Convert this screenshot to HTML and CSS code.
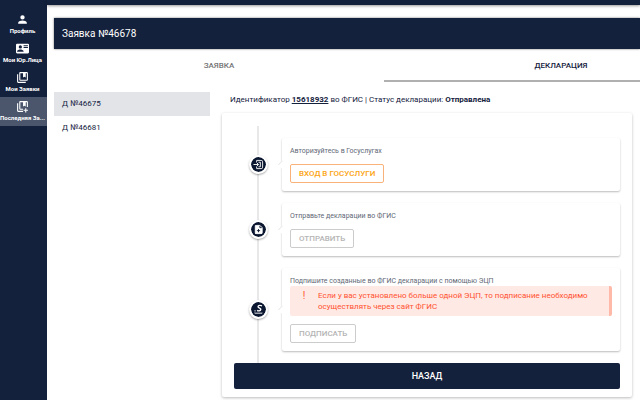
FILE: index.html
```html
<!DOCTYPE html>
<html lang="ru">
<head>
<meta charset="utf-8">
<title>Заявка №46678</title>
<link rel="stylesheet" href="styles.css">
</head>
<body>
<div class="app">
  <nav class="sidebar">
    <a class="nav-item" href="#">
      <svg class="nav-icon" viewBox="0 0 24 24"><path d="M12 12a4 4 0 1 0 0-8 4 4 0 0 0 0 8zm0 2c-2.700 0-8 1.300-8 4v2h16v-2c0-2.700-5.300-4-8-4z"/></svg>
      <span>Профиль</span>
    </a>
    <a class="nav-item" href="#">
      <svg class="nav-icon" viewBox="0 0 24 24"><path fill-rule="evenodd" d="M2 3h20a2 2 0 0 1 2 2v14a2 2 0 0 1-2 2H2a2 2 0 0 1-2-2V5a2 2 0 0 1 2-2zm6 3a3 3 0 1 0 0 6 3 3 0 0 0 0-6zm6 0v2h8V6zm0 3v2h8V9zM2 18h12v-1c0-2-4-3.100-6-3.100S2 15 2 17z"/></svg>
      <span>Мои Юр.Лица</span>
    </a>
    <a class="nav-item" href="#">
      <svg class="nav-icon" viewBox="0 0 24 24"><path fill-rule="evenodd" d="M4 6v14h14v2H4a2 2 0 0 1-2-2V6zM8 2h12a2 2 0 0 1 2 2v12a2 2 0 0 1-2 2H8a2 2 0 0 1-2-2V4c0-1.100.9-2 2-2zm0 2v12h12V4h-2v8l-2.500-1.500L13 12V4z"/></svg>
      <span>Мои Заявки</span>
    </a>
    <a class="nav-item nav-item-active" href="#">
      <svg class="nav-icon" viewBox="0 0 24 24"><path fill-rule="evenodd" d="M4 6v14h9v2H4a2 2 0 0 1-2-2V6zM8 2h12a2 2 0 0 1 2 2v9h-2V4h-2v8l-2.500-1.500L13 12V4H8v12h5v2H8a2 2 0 0 1-2-2V4c0-1.100.9-2 2-2zm9 13h2v3h3v2h-3v3h-2v-3h-3v-2h3z"/></svg>
      <span>Последняя За...</span>
    </a>
  </nav>
  <div class="page">
    <div class="topbar"></div>
    <main class="card">
      <h1 class="card-title">Заявка №46678</h1>
      <div class="tabs" role="tablist">
        <button class="tab" role="tab">Заявка</button>
        <button class="tab tab-active" role="tab" aria-selected="true">Декларация</button>
      </div>
      <div class="content">
        <div class="list">
          <a class="list-item list-item-active" href="#">Д №46675</a>
          <a class="list-item" href="#">Д №46681</a>
        </div>
        <section class="details">
          <p class="summary">Идентификатор <a href="#">15618932</a> во ФГИС | Статус декларации: <b>Отправлена</b></p>
          <div class="panel">
            <div class="timeline">
              <div class="step">
                <div class="marker"><svg class="dot" viewBox="0 0 24 24"><path d="M8 7V3h13v18H8v-4M12 7h4v10h-4"/><path d="M1 12h11M8 8l4 4-4 4"/></svg></div>
                <div class="step-card">
                  <p class="step-text">Авторизуйтесь в Госуслугах</p>
                  <button class="btn btn-orange">Вход в Госуслуги</button>
                </div>
              </div>
              <div class="step">
                <div class="marker"><svg class="dot" viewBox="0 0 24 24"><path class="solid" d="M5 3h10l5 5v13H5z"/><path class="cut" d="M15 4v4h4M12 11v7M8.500 14.500h7"/></svg></div>
                <div class="step-card">
                  <p class="step-text">Отправьте декларации во ФГИС</p>
                  <button class="btn" disabled>Отправить</button>
                </div>
              </div>
              <div class="step">
                <div class="marker"><svg class="dot" viewBox="0 0 24 24"><path class="bold" d="M20 4c-4-2-9-1-9 2s7 3 6 6-5 4-8 2"/><path d="M2 20h19M3 15h3"/></svg></div>
                <div class="step-card">
                  <p class="step-text">Подпишите созданные во ФГИС декларации с помощью ЭЦП</p>
                  <div class="alert" role="alert"><span class="alert-mark">!</span><span>Если у вас установлено больше одной ЭЦП, то подписание необходимо осуществлять через сайт ФГИС</span></div>
                  <button class="btn" disabled>Подписать</button>
                </div>
              </div>
            </div>
            <button class="back">Назад</button>
          </div>
        </section>
      </div>
    </main>
  </div>
</div>
</body>
</html>
```

FILE: styles.css
```css
* { box-sizing: border-box; }

body {
  margin: 0;
  background: #fff;
  color: #14213d;
  font-family: Roboto, "Liberation Sans", sans-serif;
  font-size: 8px;
}

h1, p { margin: 0; font-weight: 400; }
a { color: inherit; text-decoration: none; }
button { font-family: inherit; text-transform: uppercase; }

.app { display: flex; min-height: 100vh; }

.sidebar {
  flex: none;
  width: 47px;
  padding-top: 10px;
  background: #14213d;
  color: #fff;
}

.nav-item {
  display: flex;
  flex-direction: column;
  align-items: center;
  height: 29px;
  padding: 3px 2px 0 0;
  font-size: 6px;
  font-weight: 700;
  line-height: 10px;
  white-space: nowrap;
}
.nav-item-active { background: #4b566d; }
.nav-icon { flex: none; width: 13px; height: 13px; fill: #fff; }

.page { flex: 1; min-width: 0; }
.topbar { height: 5px; background: #14213d; box-shadow: 0 1px 3px #0006; }

.card { margin: 13px 0 0 7px; }

.card-title {
  padding: 0 8px;
  background: #14213d;
  color: #fff;
  font-size: 10px;
  line-height: 31px;
  box-shadow: 0 0 2px #0008;
}

.tabs { display: flex; height: 33px; }
.tab {
  flex: none;
  width: 330px;
  padding: 0;
  border: 0;
  background: none;
  color: #757575;
  font-size: 8px;
  font-weight: 500;
}
.tab-active {
  flex: 1;
  padding-left: 98px;
  border-bottom: 2px solid #b0b0b0;
  border-top: 2px solid transparent;
  color: #14213d;
}

.content { display: flex; gap: 12px; padding: 10px 8px 3px 0; }

.list { flex: none; width: 156px; }
.list-item {
  display: block;
  padding-left: 8px;
  line-height: 24px;
}
.list-item-active { background: #e2e4e8; }

.details { flex: 1; min-width: 0; }
.summary { padding: 2px 8px 7px; line-height: 12px; }
.summary a { font-weight: 700; text-decoration: underline; }

.panel {
  padding: 13px 12px 8px;
  border-radius: 2px;
  box-shadow: 0 1px 3px #0004;
}

.timeline {
  display: flex;
  flex-direction: column;
  gap: 12px;
  padding: 12px 0;
  background: linear-gradient(#e8e8e8, #e8e8e8) 23px 0 / 2px 100% no-repeat;
}

.step { display: flex; align-items: center; }
.marker { display: flex; justify-content: center; flex: none; width: 48px; }
.dot {
  width: 19px;
  height: 19px;
  padding: 2px;
  border: 2px solid #fff;
  border-radius: 50%;
  background: #0b1730;
  background-clip: padding-box;
  box-shadow: 0 1px 2px #0005;
  fill: none;
  stroke: #fff;
  stroke-width: 2;
}
.solid { fill: #fff; }
.cut { stroke: #0b1730; }
.bold { stroke-width: 3; }

.step-card {
  position: relative;
  flex: 1;
  min-width: 0;
  padding: 8px;
  border-radius: 2px;
  background: #fff;
  box-shadow: 0 1px 2px #0004;
}
.step-card::before {
  content: "";
  position: absolute;
  top: calc(50% - 3px);
  left: -3px;
  width: 6px;
  height: 6px;
  background: #fff;
  border-left: 1px solid #e8e8e8;
  transform: rotate(45deg);
}

.step-text { color: #616875; font-size: 7px; line-height: 10px; }

.btn {
  display: block;
  height: 19px;
  margin-top: 8px;
  padding: 0 8px;
  border: 1px solid #ccc;
  border-radius: 2px;
  background: #fff;
  color: #b4b4b4;
  font-size: 8px;
  font-weight: 500;
}
.btn-orange { border-color: #f9b27a; color: #fca311; }

.alert {
  display: flex;
  padding: 4px 8px 4px 0;
  border-right: 3px solid #ffb9a9;
  border-radius: 2px;
  background: #ffe9e4;
  color: #ff5230;
  line-height: 11px;
}
.alert-mark { flex: none; width: 28px; font-size: 10px; text-align: center; }

.back {
  display: block;
  width: 100%;
  height: 26px;
  border: 0;
  border-radius: 2px;
  background: #14213d;
  color: #fff;
  font-size: 9px;
  font-weight: 500;
}
```
